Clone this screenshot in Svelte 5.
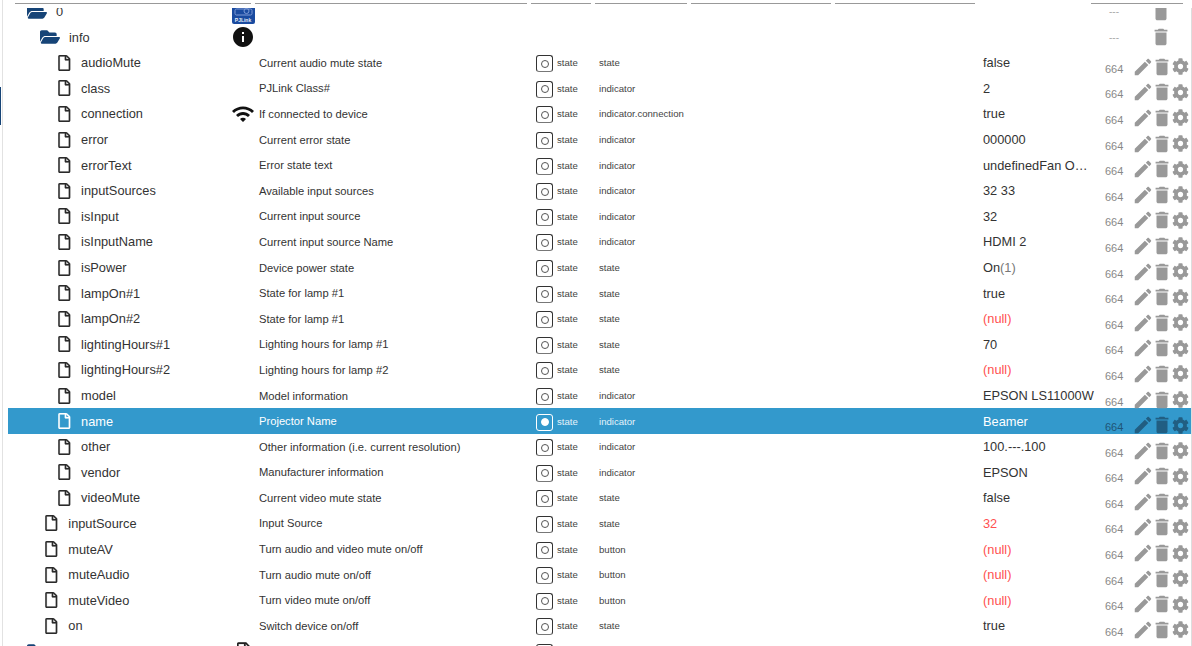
<script>
    // Material / FontAwesome style icon paths
    const paths = {
        edit: 'M3 17.25V21h3.75L17.81 9.94l-3.75-3.75L3 17.25zM20.71 7.04c.39-.39.39-1.02 0-1.41l-2.34-2.34c-.39-.39-1.02-.39-1.41 0l-1.83 1.83 3.75 3.75 1.83-1.83z',
        trash: 'M6 19c0 1.1.9 2 2 2h8c1.1 0 2-.9 2-2V7H6v12zM19 4h-3.5l-1-1h-5l-1 1H5v2h14V4z',
        cog: 'M487.4 315.7l-42.6-24.6c4.3-23.2 4.3-47 0-70.2l42.6-24.6c4.9-2.8 7.1-8.6 5.5-14-11.1-35.6-30-67.8-54.7-94.6-3.8-4.1-10-5.1-14.8-2.3L380.8 110c-17.9-15.4-38.5-27.3-60.8-35.1V25.8c0-5.6-3.9-10.5-9.4-11.7-36.7-8.2-74.3-7.8-109.2 0-5.5 1.2-9.4 6.1-9.4 11.7V75c-22.2 7.9-42.8 19.8-60.8 35.1L88.7 85.5c-4.9-2.8-11-1.9-14.8 2.3-24.7 26.7-43.6 58.9-54.7 94.6-1.7 5.4.6 11.2 5.5 14L67.3 221c-4.3 23.2-4.3 47 0 70.2l-42.6 24.6c-4.9 2.8-7.1 8.6-5.5 14 11.1 35.6 30 67.8 54.7 94.6 3.8 4.1 10 5.1 14.8 2.3l42.6-24.6c17.9 15.4 38.5 27.3 60.8 35.1v49.2c0 5.6 3.9 10.5 9.4 11.7 36.7 8.2 74.3 7.8 109.2 0 5.5-1.2 9.4-6.1 9.4-11.7v-49.2c22.2-7.9 42.8-19.8 60.8-35.1l42.6 24.6c4.9 2.8 11 1.9 14.8-2.3 24.7-26.7 43.6-58.9 54.7-94.6 1.5-5.5-.7-11.3-5.6-14.1zM256 336c-44.1 0-80-35.9-80-80s35.9-80 80-80 80 35.9 80 80-35.9 80-80 80z',
        wifi: 'M1 9l2 2c4.97-4.97 13.03-4.97 18 0l2-2C16.93 2.93 7.08 2.93 1 9zm8 8l3 3 3-3c-1.65-1.66-4.34-1.66-6 0zm-4-4l2 2c2.76-2.76 7.24-2.76 10 0l2-2C15.14 9.14 8.87 9.14 5 13z',
        info: 'M12 2C6.48 2 2 6.48 2 12s4.48 10 10 10 10-4.48 10-10S17.52 2 12 2zm1 15h-2v-6h2v6zm0-8h-2V7h2v2z',
        file: 'M369.9 97.9L286 14C277 5 264.8-.1 252.1-.1H48C21.5 0 0 21.5 0 48v416c0 26.5 21.5 48 48 48h288c26.5 0 48-21.5 48-48V131.9c0-12.7-5.1-25-14.1-34zM332.1 128H256V51.9l76.1 76.1zM48 464V48h160v104c0 13.3 10.7 24 24 24h104v288H48z',
        folder: 'M572.694 292.093L500.27 416.248A63.997 63.997 0 0 1 444.989 448H45.025c-18.523 0-30.064-20.093-20.731-36.093l72.424-124.155A64 64 0 0 1 152 256h399.964c18.523 0 30.064 20.093 20.73 36.093zM152 224h328v-48c0-26.51-21.49-48-48-48H272l-64-64H48C21.49 64 0 85.49 0 112v278.046l69.077-118.418C86.214 242.25 117.989 224 152 224z'
    };

    const headerCols = [0, 1, 2, 3, 4, 5, 6, 7];

    // [name, level, description, type role, value, value kind]
    const states = [
        ['audioMute', 2, 'Current audio mute state', 'state', 'false'],
        ['class', 2, 'PJLink Class#', 'indicator', '2'],
        ['connection', 2, 'If connected to device', 'indicator.connection', 'true', '', 'wifi'],
        ['error', 2, 'Current error state', 'indicator', '000000'],
        ['errorText', 2, 'Error state text', 'indicator', 'undefinedFan OK, Lamp OK'],
        ['inputSources', 2, 'Available input sources', 'indicator', '32 33'],
        ['isInput', 2, 'Current input source', 'indicator', '32'],
        ['isInputName', 2, 'Current input source Name', 'indicator', 'HDMI 2'],
        ['isPower', 2, 'Device power state', 'state', 'On', 'unit'],
        ['lampOn#1', 2, 'State for lamp #1', 'state', 'true'],
        ['lampOn#2', 2, 'State for lamp #1', 'state', '(null)', 'null'],
        ['lightingHours#1', 2, 'Lighting hours for lamp #1', 'state', '70'],
        ['lightingHours#2', 2, 'Lighting hours for lamp #2', 'state', '(null)', 'null'],
        ['model', 2, 'Model information', 'indicator', 'EPSON LS11000W'],
        ['name', 2, 'Projector Name', 'indicator', 'Beamer', 'selected'],
        ['other', 2, 'Other information (i.e. current resolution)', 'indicator', '100.---.100'],
        ['vendor', 2, 'Manufacturer information', 'indicator', 'EPSON'],
        ['videoMute', 2, 'Current video mute state', 'state', 'false'],
        ['inputSource', 1, 'Input Source', 'state', '32', 'ack'],
        ['muteAV', 1, 'Turn audio and video mute on/off', 'button', '(null)', 'null'],
        ['muteAudio', 1, 'Turn audio mute on/off', 'button', '(null)', 'null'],
        ['muteVideo', 1, 'Turn video mute on/off', 'button', '(null)', 'null'],
        ['on', 1, 'Switch device on/off', 'state', 'true']
    ];
</script>

<div class="tree">
    <div class="side-accent"></div>
    <div class="head">
        {#each headerCols as col}
            <div class="head-cell" class:blank={col === 6}></div>
        {/each}
    </div>

    <div class="body">
        <div class="list">
            <div class="row">
                <div class="name" style="padding-left: 19px">
                    <svg class="folder" viewBox="0 0 576 512"><path d={paths.folder} /></svg>
                    <span class="label folder-label">0</span>
                    <div class="type-icon">
                        <div class="logo">
                            <svg viewBox="0 0 23 17" width="23" height="17">
                                <rect x="3" y="9" width="17" height="6" rx="1.5" fill="none" stroke="#7f9bd6" stroke-width="1" />
                                <circle cx="14.5" cy="11" r="2.5" fill="none" stroke="#7f9bd6" stroke-width="1" />
                            </svg>
                            <span>PJLink</span>
                        </div>
                    </div>
                </div>
                <div class="desc"></div><div></div><div></div><div></div><div></div><div></div>
                <div class="ops plain">
                    <span class="acl dash">---</span>
                    <svg class="op spaced" viewBox="0 0 24 24"><path d={paths.trash} /></svg>
                </div>
            </div>

            <div class="row">
                <div class="name" style="padding-left: 32px">
                    <svg class="folder" viewBox="0 0 576 512"><path d={paths.folder} /></svg>
                    <span class="label folder-label">info</span>
                    <div class="type-icon">
                        <svg class="info" viewBox="0 0 24 24"><path d={paths.info} /></svg>
                    </div>
                </div>
                <div class="desc"></div><div></div><div></div><div></div><div></div><div></div>
                <div class="ops plain">
                    <span class="acl dash">---</span>
                    <svg class="op spaced" viewBox="0 0 24 24"><path d={paths.trash} /></svg>
                </div>
            </div>

            {#each states as [name, level, desc, role, value, kind, icon]}
                <div class="row" class:selected={kind === 'selected'}>
                    <div class="name" style="padding-left: {level * 12.8 + 24.5}px">
                        <svg class="file" viewBox="0 0 384 512"><path d={paths.file} /></svg>
                        <span class="label">{name}</span>
                        {#if icon}
                            <div class="type-icon">
                                <svg class="wifi" viewBox="0 0 24 24"><path d={paths[icon]} /></svg>
                            </div>
                        {/if}
                    </div>
                    <div class="desc">{desc}</div>
                    <div class="type">
                        <span class="type-box"><span class="dot"></span></span>
                        <span>state</span>
                    </div>
                    <div class="role">{role}</div>
                    <div></div>
                    <div></div>
                    <div class="value" class:null={kind === 'null'} class:ack={kind === 'ack'}>
                        {value}{#if kind === 'unit'}<span class="unit">(1)</span>{/if}
                    </div>
                    <div class="ops">
                        <span class="acl">664</span>
                        <svg class="op" viewBox="0 0 24 24"><path d={paths.edit} /></svg>
                        <svg class="op" viewBox="0 0 24 24"><path d={paths.trash} /></svg>
                        <svg class="cog" viewBox="0 0 512 512"><path d={paths.cog} /></svg>
                    </div>
                </div>
            {/each}

            <div class="row">
                <div class="name" style="padding-left: 19px">
                    <svg class="folder" viewBox="0 0 576 512"><path d={paths.folder} /></svg>
                    <div class="type-icon">
                        <svg class="file-dark" viewBox="0 0 384 512"><path d={paths.file} /></svg>
                    </div>
                </div>
                <div class="desc"></div>
                <div class="type"><span class="type-box"><span class="dot"></span></span></div>
            </div>
        </div>
    </div>
</div>

<style>
    :global(body) {
        margin: 0;
        background: #fff;
    }

    .tree {
        position: relative;
        height: 646px;
        display: flex;
        flex-direction: column;
        overflow: hidden;
        font-family: "Liberation Sans", Arial, sans-serif;
        color: #333;
        box-sizing: border-box;
    }

    .tree::before {
        content: '';
        position: absolute;
        left: 2px;
        top: 0;
        bottom: 0;
        width: 1px;
        background: #e2e2e2;
    }

    .side-accent {
        position: absolute;
        left: 0;
        top: 87px;
        width: 1px;
        height: 38px;
        background: #164477;
    }

    .head,
    .row {
        display: grid;
        grid-template-columns: 247px 276px 64px 96px 144px 140px 116px 100px;
        margin-left: 8px;
    }

    .head {
        height: 8px;
        flex: none;
    }

    .head-cell {
        height: 3px;
        border-bottom: 1px solid #999;
        margin-right: 4px;
    }

    .head-cell:first-child {
        margin-left: 7px;
    }

    .head-cell:nth-child(6) {
        margin-right: 0;
    }

    .head-cell:last-child {
        margin-right: 8px;
    }

    .head-cell.blank {
        border-bottom: 0;
    }

    .body {
        flex: 1;
        overflow: hidden;
        border-right: 1px solid #ddd;
    }

    .list {
        margin-top: -9.2px;
    }

    .row {
        height: 25.6px;
        grid-template-rows: 25.6px;
        align-items: center;
        font-size: 12.8px;
        white-space: nowrap;
    }

    .row.selected {
        background: #3399cc;
        color: #fff;
    }

    .name {
        display: flex;
        align-items: center;
        height: 100%;
        box-sizing: border-box;
    }

    .file {
        width: 12.5px;
        height: 16px;
        fill: #2a2a2a;
        stroke: #2a2a2a;
        stroke-width: 6;
        flex: none;
    }

    .selected .file {
        fill: #fff;
        stroke: #fff;
    }

    .folder {
        width: 20px;
        height: 18px;
        fill: #164477;
        flex: none;
    }

    .label {
        margin-left: 10.5px;
    }

    .folder-label {
        margin-left: 9px;
    }

    .type-icon {
        margin-left: auto;
        width: 24px;
        display: flex;
        justify-content: center;
        align-items: center;
    }

    .logo {
        width: 23px;
        height: 24px;
        background: #1a4ba0;
        border-radius: 2px;
        color: #e6ecf8;
        font-size: 5px;
        font-weight: bold;
        text-align: center;
        line-height: 6px;
        overflow: hidden;
    }

    .logo svg {
        display: block;
    }

    .logo span {
        display: block;
    }

    .info {
        width: 24px;
        height: 24px;
        fill: #111;
    }

    .wifi {
        width: 24px;
        height: 24px;
        fill: #111;
    }

    .file-dark {
        width: 13px;
        height: 18px;
        fill: #222;
        stroke: #222;
        stroke-width: 6;
    }

    .desc {
        font-size: 11.2px;
        padding-left: 4px;
    }

    .type {
        display: flex;
        align-items: center;
        font-size: 9.6px;
        padding-left: 5px;
        color: #444;
    }

    .type-box {
        box-sizing: border-box;
        width: 17px;
        height: 17px;
        margin-top: 2px;
        margin-right: 4px;
        border: 1px solid #333;
        border-bottom-color: #777;
        border-radius: 3px;
        display: flex;
        align-items: center;
        justify-content: center;
    }

    .dot {
        box-sizing: border-box;
        width: 8px;
        height: 8px;
        border: 1px solid #555;
        border-radius: 50%;
    }

    .role {
        font-size: 9.6px;
        padding-left: 4px;
        color: #444;
    }

    .selected .type,
    .selected .role {
        color: #e4f2fa;
    }

    .selected .type-box {
        border-color: #fff;
    }

    .selected .dot {
        background: #fff;
        border-color: #fff;
    }

    .value {
        padding-left: 8px;
        margin-right: -5px;
        overflow: hidden;
        text-overflow: ellipsis;
    }

    .value.null,
    .value.ack {
        color: #ff5050;
    }

    .unit {
        color: #777;
    }

    .ops {
        display: flex;
        align-items: center;
        padding-left: 14px;
        padding-top: 8px;
        height: 100%;
        box-sizing: border-box;
        fill: #999;
    }

    .ops.plain {
        padding-top: 0;
    }

    .acl {
        width: 28px;
        font-size: 11px;
        color: #888;
        padding-top: 4px;
        flex: none;
    }

    .acl.dash {
        font-size: 10px;
        color: #aaa;
        padding-left: 4px;
        padding-top: 0;
        box-sizing: border-box;
    }

    .op {
        width: 22px;
        height: 22px;
        margin: 0 -1.5px;
        flex: none;
    }

    .op.spaced {
        margin-left: 16.5px;
    }

    .cog {
        width: 17px;
        height: 17px;
        margin-left: 1px;
        flex: none;
    }

    .selected .ops {
        fill: #215e82;
    }

    .selected .acl {
        color: #1f5577;
    }
</style>
